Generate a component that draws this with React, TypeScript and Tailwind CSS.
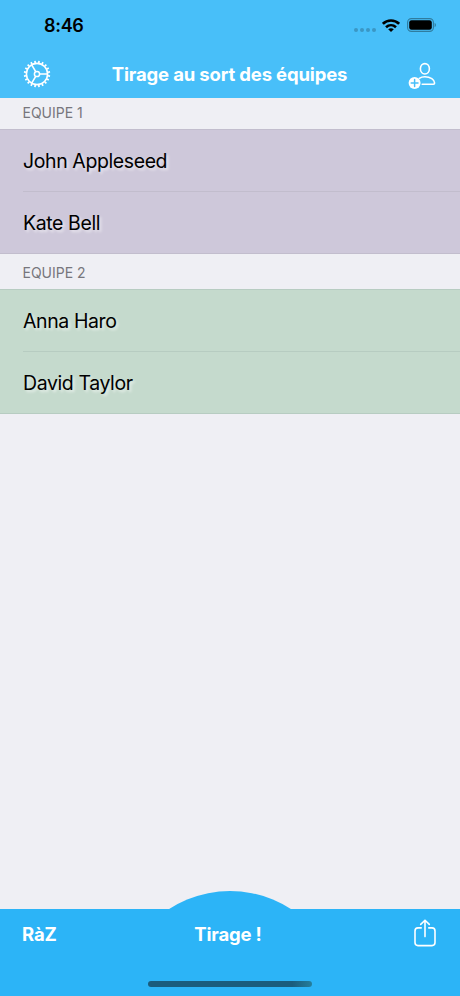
import React from 'react';

interface Team {
  name: string;
  color: string;
  border: string;
  headerHeight: string;
  players: string[];
}

const teams: Team[] = [
  {
    name: 'EQUIPE 1',
    color: 'bg-[#cec8da]',
    border: 'border-[#c2bdcd]',
    headerHeight: 'h-[31px] pb-[2px]',
    players: ['John Appleseed', 'Kate Bell'],
  },
  {
    name: 'EQUIPE 2',
    color: 'bg-[#c5dacd]',
    border: 'border-[#b7ccc1]',
    headerHeight: 'h-[35px] pt-[2px]',
    players: ['Anna Haro', 'David Taylor'],
  },
];

const TEETH = Array.from({ length: 20 }, (_, i) => i * 18 + 9);

const GearIcon: React.FC = () => (
  <svg width="28" height="28" viewBox="0 0 28 28" fill="none" stroke="white" strokeWidth="1.6">
    <circle cx="14" cy="14" r="10.6" />
    <circle cx="14" cy="14" r="2.6" strokeWidth="1.5" />
    <path d="M16.6 14H24.6M12.7 11.7L8.7 4.8M12.7 16.3L8.7 23.2" strokeWidth="1.6" />
    {TEETH.map((angle) => (
      <path key={angle} d="M14 2.9V0.8" strokeWidth="1.7" transform={`rotate(${angle} 14 14)`} />
    ))}
  </svg>
);

const AddPersonIcon: React.FC = () => (
  <svg width="28" height="28" viewBox="0 0 28 28" fill="none" stroke="white" strokeWidth="1.6">
    <ellipse cx="16.9" cy="6.8" rx="4.5" ry="5.2" />
    <path
      d="M11.3 16.3C12.9 15.2 14.8 14.7 16.9 14.7C22.4 14.7 26.6 17.9 26.6 21.1C26.6 21.9 26.2 22.2 25.4 22.2H14.2"
      strokeLinecap="round"
    />
    <circle cx="6.6" cy="21" r="6" fill="white" stroke="none" />
    <path d="M6.6 17.6V24.4M3.2 21H10" stroke="#48bff9" strokeWidth="1.5" strokeLinecap="round" />
  </svg>
);

const ShareIcon: React.FC = () => (
  <svg
    width="24"
    height="28"
    viewBox="0 0 24 28"
    fill="none"
    stroke="white"
    strokeWidth="1.6"
    strokeLinecap="round"
    strokeLinejoin="round"
  >
    <path d="M8.2 8.9H5A3 3 0 0 0 2 11.9V23.6A3 3 0 0 0 5 26.6H19A3 3 0 0 0 22 23.6V11.9A3 3 0 0 0 19 8.9H15.8" />
    <path d="M12 17.6V1.4M7.7 5.4L12 1.2L16.3 5.4" />
  </svg>
);

const StatusBar: React.FC = () => (
  <div className="flex h-[50px] items-center justify-between pr-[23px] pl-[44px]">
    <span className="pt-px text-[18px] font-semibold tracking-[-0.3px] text-black">8:46</span>
    <div className="flex items-center">
      <div className="mt-[9px] mr-[6px] flex gap-[2px]">
        {[0, 1, 2, 3].map((dot) => (
          <span key={dot} className="size-[4px] rounded-full bg-[#3a97c5]" />
        ))}
      </div>
      <svg width="18" height="13" viewBox="0 0 18 13" fill="none" stroke="black" strokeWidth="2.6">
        <path d="M0.9 4.8C5.4 0.4 12.6 0.4 17.1 4.8" />
        <path d="M4 8.2C6.9 5.5 11.1 5.5 14 8.2" />
        <path d="M9 13L6.2 10.2C7.8 8.8 10.2 8.8 11.8 10.2Z" fill="black" stroke="none" />
      </svg>
      <svg className="ml-[7px]" width="30" height="14" viewBox="0 0 30 14">
        <rect x="0.6" y="0.6" width="25.8" height="12.8" rx="3.8" fill="none" stroke="#2f7c9f" strokeWidth="1.1" />
        <rect x="2.2" y="2.2" width="22.6" height="9.6" rx="2.3" fill="black" />
        <path d="M27.6 4.8C29.4 5.5 29.4 8.5 27.6 9.2Z" fill="#2f7c9f" />
      </svg>
    </div>
  </div>
);

const TeamSection: React.FC<{ team: Team }> = ({ team }) => (
  <section>
    <h2
      className={`flex items-center pl-[22.5px] text-[14px] font-normal text-[#77767c] ${team.headerHeight}`}
    >
      {team.name}
    </h2>
    <ul className={`h-[125px] border-y ${team.color} ${team.border}`}>
      {team.players.map((player, index) => (
        <li
          key={player}
          className={`ml-[23px] flex items-center pt-[2px] text-[19.5px] tracking-[-0.4px] text-black [text-shadow:2px_2px_3px_rgba(255,255,255,0.65)] ${
            index > 0 ? `h-[62px] border-t ${team.border}` : 'h-[61px]'
          }`}
        >
          {player}
        </li>
      ))}
    </ul>
  </section>
);

const App: React.FC = () => {
  return (
    <div className="flex h-[996px] w-[460px] flex-col overflow-hidden bg-[#efeff4] font-['Inter',sans-serif]">
      <header className="h-[98px] bg-[#48bff9]">
        <StatusBar />
        <div className="flex h-[48px] items-center justify-between pr-[24px] pl-[23px]">
          <button type="button" aria-label="Réglages">
            <GearIcon />
          </button>
          <h1 className="pt-[2px] text-[18.5px] font-bold tracking-[-0.16px] text-white">
            Tirage au sort des équipes
          </h1>
          <button type="button" className="pt-[3px]" aria-label="Ajouter">
            <AddPersonIcon />
          </button>
        </div>
      </header>

      <main className="flex-1">
        {teams.map((team) => (
          <TeamSection key={team.name} team={team} />
        ))}
      </main>

      <footer className="relative h-[87px] bg-[#2cb4f7]">
        {/* Dome behind the draw button */}
        <div className="absolute -top-[18px] left-[118px] h-[18px] w-[224px] overflow-hidden">
          <div className="size-[224px] rounded-full bg-[#2cb4f7]" />
        </div>
        <div className="grid h-[50px] grid-cols-3 items-center px-[23px] text-[18.5px] font-bold tracking-[-0.16px] text-white">
          <button type="button" className="-ml-px justify-self-start pt-[2px]">
            RàZ
          </button>
          <button type="button" className="justify-self-center pt-[2px] pr-[4px]">
            Tirage !
          </button>
          <button type="button" className="justify-self-end pb-[2px]" aria-label="Partager">
            <ShareIcon />
          </button>
        </div>
        <div className="mx-auto mt-[22px] h-[6px] w-[164px] rounded-full bg-linear-to-r from-[#1a5c7d] from-88% to-[#257f9d]" />
      </footer>
    </div>
  );
};

export default App;
